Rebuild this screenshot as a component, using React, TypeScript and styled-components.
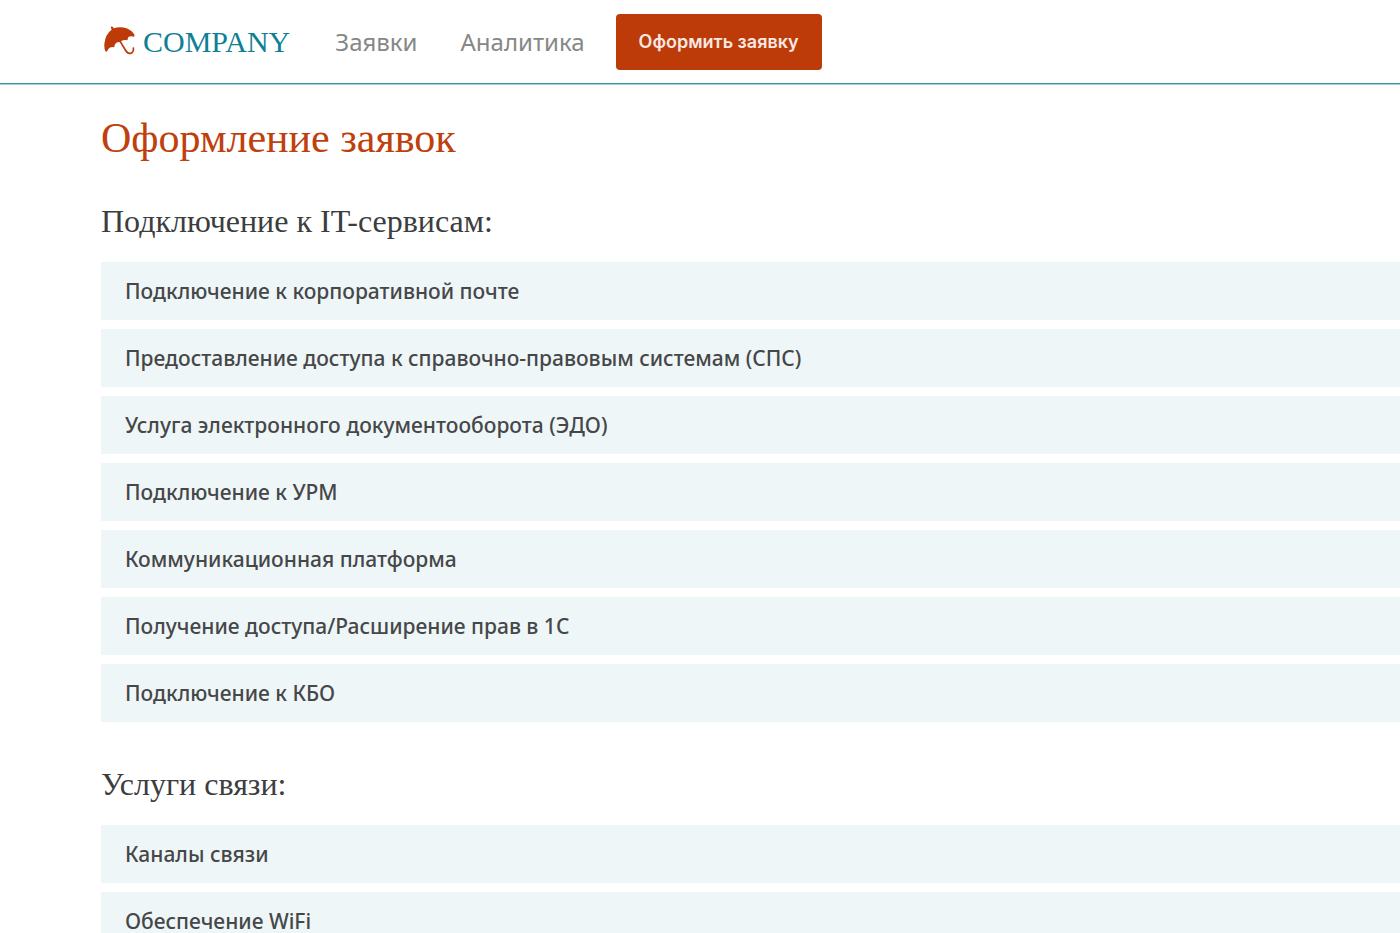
import React from "react";
import styled, { createGlobalStyle } from "styled-components";

const GlobalStyle = createGlobalStyle`
  *, *::before, *::after { box-sizing: border-box; }
  body {
    margin: 0;
    background: #fff;
    color: #3b3d3e;
    font-family: "Noto Sans", sans-serif;
  }
`;

const Header = styled.header`
  display: flex;
  align-items: center;
  height: 84px;
  padding: 0 101px;
  border-bottom: 1px solid #3a93a8;
  box-shadow: 0 1px #a3cdd8;
`;

const Brand = styled.a`
  display: flex;
  align-items: center;
  gap: 7px;
  margin-left: 3px;
  color: #0f7f96;
  font: 30px/36px "Liberation Serif", serif;
  text-decoration: none;
`;

const Umbrella = styled.svg`
  width: 32px;
  height: 30px;
  flex: none;
  margin-bottom: 2px;
`;

const Nav = styled.nav`
  display: flex;
  align-items: center;
  gap: 43px;
  margin: 0 31px 0 45px;
`;

const NavLink = styled.a`
  color: #868888;
  font-size: 24px;
  line-height: 32px;
  text-decoration: none;
`;

const SubmitButton = styled.button`
  height: 56px;
  padding: 0 23px;
  border: 0;
  border-radius: 4px;
  background: #bc3b08;
  color: #f9e9e2;
  font: 600 18px/24px Inter, sans-serif;
  cursor: pointer;
`;

const Main = styled.main`
  padding: 30px 0 40px 101px;
`;

const Title = styled.h1`
  margin: 0 0 38px;
  color: #bf400d;
  font: 42px/48px "Liberation Serif", serif;
`;

const Section = styled.section`
  margin-bottom: 41px;
`;

const SectionTitle = styled.h2`
  margin: 0;
  padding: 1px 0 21px;
  font: 32px/40px "Liberation Serif", serif;
`;

const ServiceList = styled.ul`
  display: grid;
  gap: 9px;
  margin: 0;
  padding: 0;
  list-style: none;
`;

const ServiceLink = styled.a`
  display: block;
  padding: 14px 24px;
  background: #eff6f8;
  color: #454748;
  font-size: 21px;
  font-weight: 500;
  line-height: 30px;
  text-decoration: none;
`;

const sections = [
  {
    title: "Подключение к IT-сервисам:",
    services: [
      "Подключение к корпоративной почте",
      "Предоставление доступа к справочно-правовым системам (СПС)",
      "Услуга электронного документооборота (ЭДО)",
      "Подключение к УРМ",
      "Коммуникационная платформа",
      "Получение доступа/Расширение прав в 1С",
      "Подключение к КБО",
    ],
  },
  {
    title: "Услуги связи:",
    services: ["Каналы связи", "Обеспечение WiFi"],
  },
];

export default function App() {
  return (
    <>
      <GlobalStyle />
      <Header>
        <Brand href="#">
          <Umbrella viewBox="0 0 96 90" aria-hidden="true">
            <path
              fill="#bc3b08"
              d="M20 4 Q23 0 27 3 L29 7 Q48 1 68 7 Q86 15 92 28 L90 32 Q80 29 73 33 L70 43 Q59 40 51 46 L49 49 Q43 47 36 51 Q30 57 31 64 Q19 61 13 69 Q10 76 6 78 Q0 70 1 54 Q4 24 23 11 Z"
            />
            <path
              fill="none"
              stroke="#bc3b08"
              strokeWidth="5"
              strokeLinecap="round"
              d="M49 47 L64 72 Q71 84 80 82 Q90 79 88 66"
            />
          </Umbrella>
          COMPANY
        </Brand>
        <Nav>
          <NavLink href="#">Заявки</NavLink>
          <NavLink href="#">Аналитика</NavLink>
        </Nav>
        <SubmitButton type="button">Оформить заявку</SubmitButton>
      </Header>
      <Main>
        <Title>Оформление заявок</Title>
        {sections.map((section) => (
          <Section key={section.title}>
            <SectionTitle>{section.title}</SectionTitle>
            <ServiceList>
              {section.services.map((service) => (
                <li key={service}>
                  <ServiceLink href="#">{service}</ServiceLink>
                </li>
              ))}
            </ServiceList>
          </Section>
        ))}
      </Main>
    </>
  );
}
